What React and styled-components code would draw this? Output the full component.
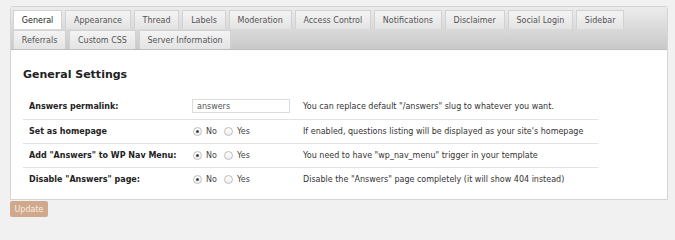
import React from 'react';
import styled, { createGlobalStyle } from 'styled-components';

const GlobalStyle = createGlobalStyle`
  body {
    margin: 0;
    background: #f1f1f1;
    font-family: 'DejaVu Sans', Verdana, sans-serif;
    color: #222;
  }
`;

const tabs = [
  'General',
  'Appearance',
  'Thread',
  'Labels',
  'Moderation',
  'Access Control',
  'Notifications',
  'Disclaimer',
  'Social Login',
  'Sidebar',
  'Referrals',
  'Custom CSS',
  'Server Information',
];

const rows = [
  {
    label: 'Answers permalink:',
    type: 'text',
    desc: 'You can replace default "/answers" slug to whatever you want.',
  },
  {
    label: 'Set as homepage',
    type: 'radio',
    desc: "If enabled, questions listing will be displayed as your site's homepage",
  },
  {
    label: 'Add "Answers" to WP Nav Menu:',
    type: 'radio',
    desc: 'You need to have "wp_nav_menu" trigger in your template',
  },
  {
    label: 'Disable "Answers" page:',
    type: 'radio',
    desc: 'Disable the "Answers" page completely (it will show 404 instead)',
  },
];

const App = () => {
  return (
    <Page>
      <GlobalStyle />
      <Panel>
        <TabBar>
          {tabs.map((t, i) => (
            <Tab key={t} $active={i === 0}>
              {t}
            </Tab>
          ))}
        </TabBar>
        <Content>
          <Heading>General Settings</Heading>
          <Table>
            {rows.map((r, i) => (
              <Row key={r.label} $tall={r.type === 'text'}>
                <Label>{r.label}</Label>
                <Control>
                  {r.type === 'text' ? (
                    <TextInput defaultValue='answers' />
                  ) : (
                    <>
                      <Choice>
                        <Radio type='radio' name={'r' + i} defaultChecked />
                        No
                      </Choice>
                      <Choice>
                        <Radio type='radio' name={'r' + i} />
                        Yes
                      </Choice>
                    </>
                  )}
                </Control>
                <Desc>{r.desc}</Desc>
              </Row>
            ))}
          </Table>
        </Content>
      </Panel>
      <UpdateButton>Update</UpdateButton>
    </Page>
  );
};

const Page = styled.div`
  padding: 6px 7px 0 10px;
`;

const Panel = styled.div`
  width: 656px;
  background: #fff;
  border: 1px solid #d4d4d4;
  border-radius: 3px 3px 0 0;
`;

const TabBar = styled.div`
  display: flex;
  flex-wrap: wrap;
  column-gap: 3px;
  row-gap: 1px;
  padding: 3px 2px 0 2px;
  background: linear-gradient(#ececec, #c9c9c9);
  border-bottom: 1px solid #bdbdbd;
  border-radius: 2px 2px 0 0;
`;

const Tab = styled.div`
  height: 19px;
  box-sizing: border-box;
  padding: 0 7.8px;
  display: flex;
  align-items: center;
  font-size: 8px;
  color: ${({ $active }) => ($active ? '#222' : '#555')};
  background: ${({ $active }) =>
    $active ? '#fff' : 'linear-gradient(#f4f4f4, #e3e3e3)'};
  border: 1px solid #d2d2d2;
  border-bottom: none;
`;

const Content = styled.div`
  padding: 17px 13px 8px 12px;
`;

const Heading = styled.h2`
  margin: 0 0 10px;
  font-size: 11px;
  line-height: 16px;
  font-weight: bold;
  color: #222;
`;

const Table = styled.div`
  width: 575px;
`;

const Row = styled.div`
  display: grid;
  grid-template-columns: 169px 111px 1fr;
  align-items: center;
  height: ${({ $tall }) => ($tall ? '26px' : '23px')};
  border-bottom: 1px solid #e2e2e2;
  font-size: 8px;

  &:last-child {
    border-bottom: none;
  }
`;

const Label = styled.div`
  padding-left: 6px;
  font-weight: bold;
  color: #222;
`;

const Control = styled.div`
  display: flex;
  align-items: center;
  gap: 6px;
`;

const Choice = styled.label`
  display: flex;
  align-items: center;
  gap: 4px;
  color: #444;
`;

const Radio = styled.input`
  appearance: none;
  margin: 0 0 0 1px;
  width: 9px;
  height: 9px;
  border: 1px solid #bdbdbd;
  border-radius: 50%;
  background: linear-gradient(#fff, #f0f0f0);
  display: grid;
  place-items: center;

  &:checked::after {
    content: '';
    width: 3px;
    height: 3px;
    border-radius: 50%;
    background: #444;
  }
`;

const TextInput = styled.input`
  width: 98px;
  height: 14px;
  box-sizing: border-box;
  border: 1px solid #dcdcdc;
  padding: 0 4px;
  font-family: inherit;
  font-size: 8px;
  color: #555;
  outline: none;
`;

const Desc = styled.div`
  color: #333;
`;

const UpdateButton = styled.button`
  display: block;
  margin-top: 1px;
  width: 38px;
  height: 16px;
  padding: 0;
  border: none;
  border-radius: 2px;
  background: #d0a98c;
  color: #f6ece4;
  font-family: inherit;
  font-size: 8px;
`;

export default App;
